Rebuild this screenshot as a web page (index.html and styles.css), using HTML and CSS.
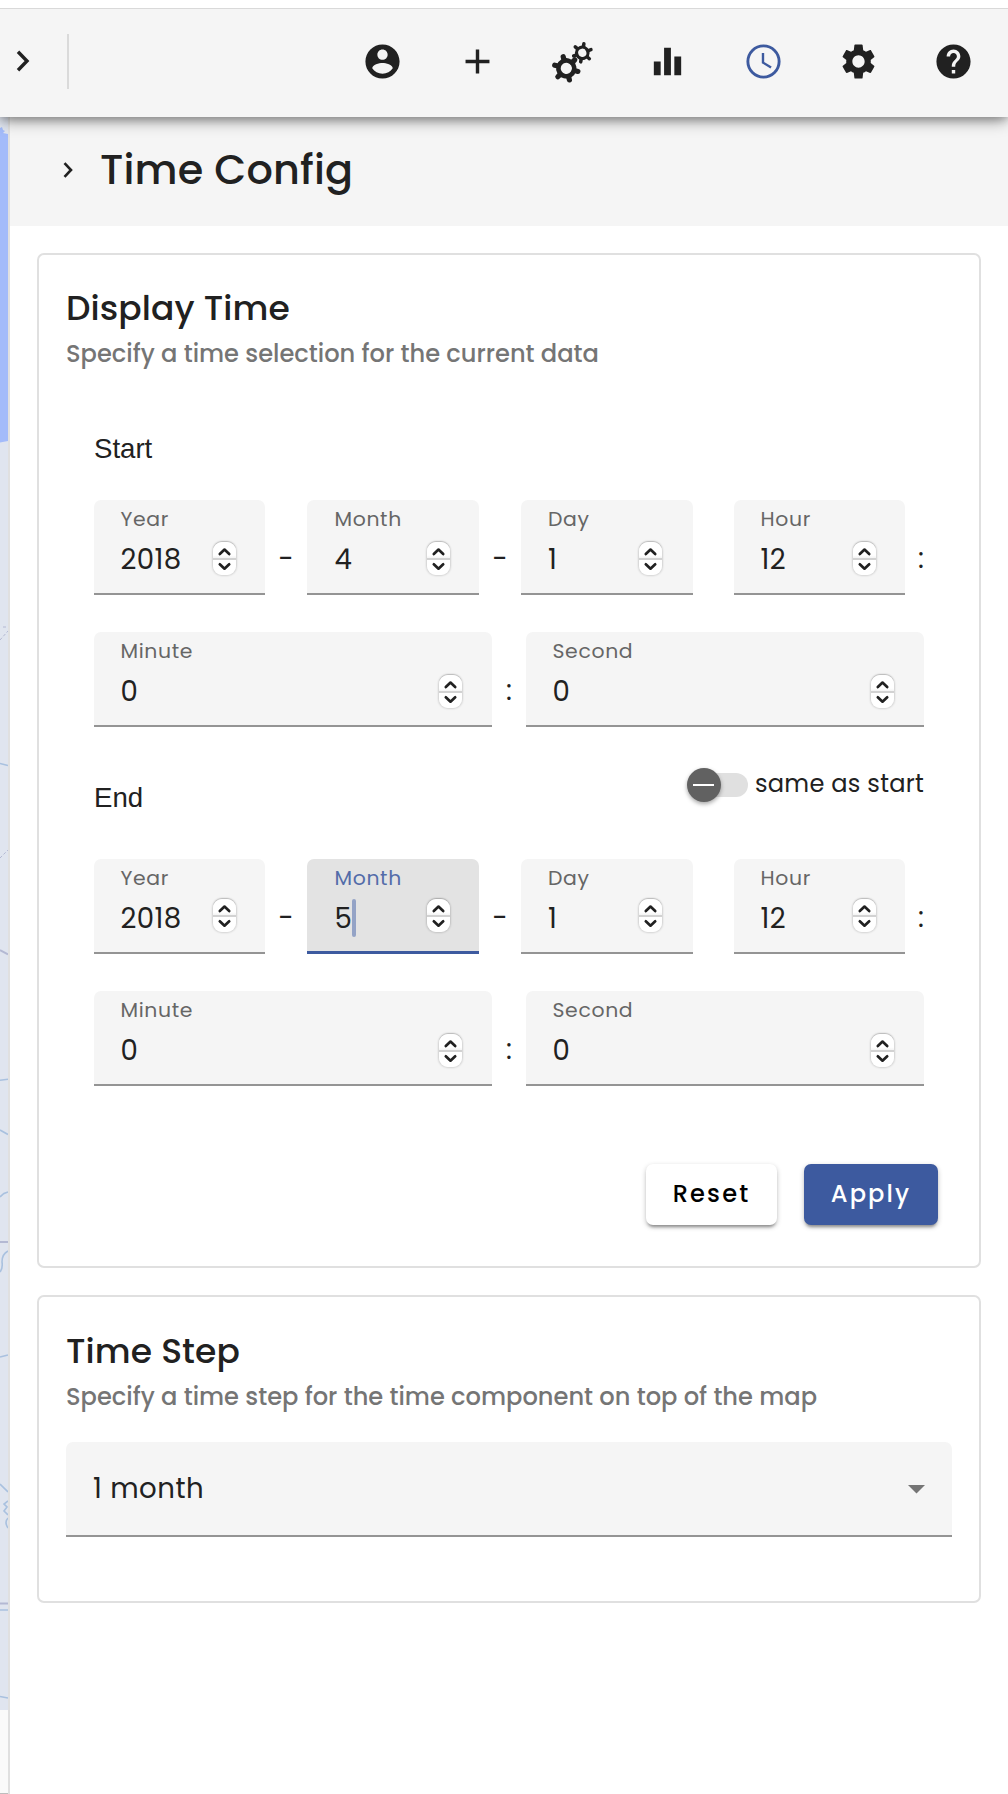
FILE: index.html
```html
<!DOCTYPE html>
<html lang="en">
<head>
<meta charset="utf-8">
<title>Time Config</title>
<link rel="stylesheet" href="styles.css">
</head>
<body>
<svg width="0" height="0" class="defs">
  <symbol id="spin" viewBox="0 0 23 33">
    <path d="M6.800 12 11.500 7.600l4.700 4.400M6.800 22.300 11.500 26.700l4.700-4.400" fill="none" stroke="#212121" stroke-width="2.700" stroke-linecap="round" stroke-linejoin="round"/>
  </symbol>
</svg>
<header class="toolbar">
  <svg class="back" viewBox="0 0 14 22"><path d="M2 1.700 11 11 2 20.300" fill="none" stroke="#212121" stroke-width="3.400"/></svg>
  <span class="divider"></span>
  <nav class="icons">
    <svg class="icon" viewBox="0 0 24 24"><path d="M12 2C6.480 2 2 6.480 2 12s4.480 10 10 10 10-4.480 10-10S17.520 2 12 2zm0 3c1.660 0 3 1.340 3 3s-1.340 3-3 3-3-1.340-3-3 1.340-3 3-3zm0 14.200c-2.500 0-4.710-1.280-6-3.220.03-1.990 4-3.080 6-3.080 1.990 0 5.970 1.090 6 3.080-1.290 1.940-3.500 3.220-6 3.220z"/></svg>
    <svg class="icon" viewBox="0 0 24 24"><path d="M19 13h-6v6h-2v-6H5v-2h6V5h2v6h6v2z"/></svg>
    <svg class="icon" viewBox="0 0 41 41">
      <g transform="translate(14.300 27.300) rotate(15)">
        <circle r="7.900" fill="none" stroke="#212121" stroke-width="4.600"/>
        <path d="M8.500 0H12M4.250 7.360 6 10.390M-4.250 7.360-6 10.390M-8.500 0H-12M-4.250-7.360-6-10.390M4.250-7.360 6-10.390" stroke="#212121" stroke-width="5.200" stroke-linecap="round"/>
      </g>
      <g transform="translate(30.300 11.800) rotate(-20)">
        <circle r="5.700" fill="none" stroke="#212121" stroke-width="3.200"/>
        <path d="M6.500 0H9.200M3.250 5.630 4.600 7.970M-3.250 5.630-4.600 7.970M-6.500 0H-9.200M-3.250-5.630-4.600-7.970M3.250-5.630 4.600-7.970" stroke="#212121" stroke-width="3.500" stroke-linecap="round"/>
      </g>
    </svg>
    <svg class="icon" viewBox="0 0 24 24"><path d="M10 20h4V4h-4v16zm-6 0h4v-8H4v8zM16 9v11h4V9h-4z"/></svg>
    <svg class="icon active" viewBox="0 0 24 24"><path fill-rule="evenodd" d="M12 2a10 10 0 1 0 0 20 10 10 0 0 0 0-20zm0 18.300a8.300 8.300 0 1 1 0-16.600 8.300 8.300 0 0 1 0 16.600z"/><path d="M12.400 7H11v6l5.050 3.100.75-1.200-4.400-2.600z"/></svg>
    <svg class="icon" viewBox="0 0 24 24"><path d="M19.140 12.940c.04-.3.06-.61.06-.94 0-.32-.02-.64-.07-.94l2.030-1.580c.18-.14.23-.41.12-.61l-1.920-3.320c-.12-.22-.37-.29-.59-.22l-2.390.96c-.5-.38-1.030-.7-1.620-.94l-.36-2.940c-.04-.24-.24-.41-.48-.41h-3.840c-.24 0-.43.17-.47.41l-.36 2.940c-.59.24-1.130.57-1.620.94l-2.390-.96c-.22-.08-.47 0-.59.22L2.740 8.870c-.12.21-.08.47.12.61l2.030 1.580c-.05.3-.09.63-.09.94s.02.64.07.94l-2.030 1.580c-.18.14-.23.41-.12.61l1.920 3.320c.12.22.37.29.59.22l2.390-.96c.5.38 1.030.7 1.620.94l.36 2.940c.05.24.24.41.48.41h3.840c.24 0 .44-.17.47-.41l.36-2.940c.59-.24 1.130-.56 1.620-.94l2.390.96c.22.08.47 0 .59-.22l1.920-3.320c.12-.22.07-.47-.12-.61l-2.010-1.580zM12 15.600c-1.980 0-3.600-1.620-3.600-3.600s1.620-3.600 3.600-3.600 3.600 1.620 3.600 3.600-1.620 3.600-3.600 3.600z"/></svg>
    <svg class="icon" viewBox="0 0 24 24"><path d="M12 2C6.480 2 2 6.480 2 12s4.480 10 10 10 10-4.480 10-10S17.520 2 12 2zm1 17h-2v-2h2v2zm2.070-7.750l-.9.920C13.450 12.900 13 13.500 13 15h-2v-.5c0-1.100.45-2.100 1.170-2.830l1.240-1.260c.37-.36.59-.86.59-1.410 0-1.100-.9-2-2-2s-2 .9-2 2H8c0-2.210 1.790-4 4-4s4 1.790 4 4c0 .88-.36 1.680-.93 2.250z"/></svg>
  </nav>
</header>
<div class="shell">
  <svg class="map" viewBox="0 117 8 1677">
    <rect y="117" width="8" height="1593" fill="#e0e5ef"/>
    <path d="M0 128l2-1 1 3 2 1-2 2 5 1V441l-8 1.500z" fill="#a3bbfa"/>
    <g fill="none" stroke="#a9c1df" stroke-width="1.600">
      <path d="M0 763.500l8 2M0 1080.300l8-1M0 1130l8 4.500M0 1197q3-4 8-5M0 1272q3-4 2-10 0-8 6-11M0 1357l8-2M0 1484l8 8M8 1501l-4 3 3 3-3 4 4 4M8 1518q-4 4 0 10M0 1610h8M0 1696.500l8 1.500"/>
    </g>
    <g fill="none" stroke="#b4b9d3" stroke-width="2">
      <path d="M0 950l8 4.500M0 1242h8M0 1603.500h8"/>
      <path d="M0 640l8-9M3 627h4M0 858l8-8" stroke-width="1" stroke-dasharray="3 2"/>
    </g>
    <rect y="1710" width="8" height="84" fill="#fafafa"/>
    <rect y="1793" width="8" height="1" fill="#bdbdbd"/>
  </svg>
  <main class="panel">
    <div class="panel-head">
      <svg class="chev" viewBox="0 0 10 16"><path d="M1.500 1.200 8 8 1.500 14.800" fill="none" stroke="#212121" stroke-width="2.600"/></svg>
      <h1>Time Config</h1>
    </div>
    <section class="card time">
      <h2>Display Time</h2>
      <p class="sub">Specify a time selection for the current data</p>
      <div class="form">
        <div class="group first"><h3>Start</h3></div>
        <div class="row date">
          <div class="field"><div class="txt"><label>Year</label><b>2018</b></div><svg class="spinner"><use href="#spin"/></svg></div>
          <i class="sep">-</i>
          <div class="field month"><div class="txt"><label>Month</label><b>4</b></div><svg class="spinner"><use href="#spin"/></svg></div>
          <i class="sep">-</i>
          <div class="field day"><div class="txt"><label>Day</label><b>1</b></div><svg class="spinner"><use href="#spin"/></svg></div>
          <i></i>
          <div class="field"><div class="txt"><label>Hour</label><b>12</b></div><svg class="spinner"><use href="#spin"/></svg></div>
          <i class="sep end">:</i>
        </div>
        <div class="row clock">
          <div class="field"><div class="txt"><label>Minute</label><b>0</b></div><svg class="spinner"><use href="#spin"/></svg></div>
          <i class="sep">:</i>
          <div class="field"><div class="txt"><label>Second</label><b>0</b></div><svg class="spinner"><use href="#spin"/></svg></div>
        </div>
        <div class="group second">
          <h3>End</h3>
          <div class="toggle"><span class="track"><span class="thumb"></span></span><span class="tlabel">same as start</span></div>
        </div>
        <div class="row date up">
          <div class="field"><div class="txt"><label>Year</label><b>2018</b></div><svg class="spinner"><use href="#spin"/></svg></div>
          <i class="sep">-</i>
          <div class="field month focus"><div class="txt"><label>Month</label><b>5<span class="caret"></span></b></div><svg class="spinner"><use href="#spin"/></svg></div>
          <i class="sep">-</i>
          <div class="field day"><div class="txt"><label>Day</label><b>1</b></div><svg class="spinner"><use href="#spin"/></svg></div>
          <i></i>
          <div class="field"><div class="txt"><label>Hour</label><b>12</b></div><svg class="spinner"><use href="#spin"/></svg></div>
          <i class="sep end">:</i>
        </div>
        <div class="row clock">
          <div class="field"><div class="txt"><label>Minute</label><b>0</b></div><svg class="spinner"><use href="#spin"/></svg></div>
          <i class="sep">:</i>
          <div class="field"><div class="txt"><label>Second</label><b>0</b></div><svg class="spinner"><use href="#spin"/></svg></div>
        </div>
      </div>
      <div class="actions"><button class="btn reset">Reset</button><button class="btn apply">Apply</button></div>
    </section>
    <section class="card step">
      <h2>Time Step</h2>
      <p class="sub">Specify a time step for the time component on top of the map</p>
      <div class="select"><span class="val">1 month</span><svg class="arrow" viewBox="0 0 17 9"><path d="M0 0h17L8.500 8.500z" fill="#757575"/></svg></div>
    </section>
  </main>
</div>
</body>
</html>
```
FILE: styles.css
```css
* { box-sizing: border-box; }
body { margin: 0; background: #fff; color: #212121; font-family: Poppins, Inter, "Liberation Sans", sans-serif; padding-top: 8px; height: 1794px; overflow: hidden; }
h1, h2, h3, p { margin: 0; font-weight: 500; }
i, b { font-style: normal; font-weight: 400; }
.defs { display: none; }
.toolbar { position: relative; z-index: 1; height: 109px; border-top: 1px solid #d9d9d9; background: #f5f5f5; display: flex; align-items: center; padding: 0 34px 4px 16px; box-shadow: 0 6px 14px -2px rgba(0,0,0,.4), 0 2px 8px rgba(0,0,0,.2); clip-path: inset(0 0 -40px 0); }
.back { width: 14px; height: 22px; }
.divider { width: 2px; height: 55px; background: #dadada; margin-left: 37px; }
.icons { display: flex; gap: 54.300px; margin-left: auto; margin-right: -.200px; }
.icon { width: 41px; height: 41px; fill: #212121; overflow: visible; }
.icon:first-child { margin-right: -.400px; }
.icon.active { fill: #3d5a9f; }
.shell { display: flex; height: 1677px; }
.map { width: 8px; height: 1677px; }
.panel { flex: 1; border-left: 2px solid #e0e0e0; }
.panel-head { height: 109px; background: #f5f5f5; display: flex; align-items: center; padding: 0 0 3px 53px; }
.chev { width: 10px; height: 16px; }
h1 { font-size: 41.400px; line-height: 50px; margin-left: 27px; letter-spacing: .15px; }
.card { margin: 27px 27px 0; border: 2px solid #e0e0e0; border-radius: 7px; padding: 33px 27px 0; }
.time { height: 1015px; }
.step { height: 308px; padding-top: 34px; }
h2 { font-size: 34.500px; line-height: 40px; letter-spacing: .1px; }
.sub { margin-top: 11px; font-size: 24.150px; line-height: 30px; color: #757575; }
.form { margin: 0 28px; }
.group { display: flex; justify-content: space-between; }
.first { padding: 60px 0 31px; }
.second { height: 132px; padding-top: 51px; }
h3 { font-family: "Liberation Sans", sans-serif; font-size: 27.600px; line-height: 40px; font-weight: 400; }
.row { display: grid; }
.date { grid-template-columns: 171px 42px 172px 42px 172px 41px 171px 19px; }
.clock { grid-template-columns: 398px 34px 398px; margin-top: 37px; }
.sep { font-size: 27.600px; line-height: 40px; padding-top: 39px; text-align: center; }
.end { text-align: right; }
.field { height: 95px; background: #f5f5f5; border-bottom: 2px solid #949494; border-radius: 7px 7px 0 0; display: flex; justify-content: space-between; padding: 7px 29px 0 26.500px; }
.month { padding-left: 27.500px; }
.day { padding-left: 27px; padding-right: 31px; }
.txt { display: flex; flex-direction: column; }
label { font-size: 20.400px; line-height: 24px; letter-spacing: .65px; color: #666; }
b { display: flex; font-size: 27.600px; line-height: 40px; margin-top: 9px; letter-spacing: .4px; }
.spinner { width: 23px; height: 33px; margin-top: 35px; background: linear-gradient(#fff 40%, #f4f4f4 48%, #d2d2d2 48%, #d2d2d2 54%, #fff 54%); border-radius: 9px; box-shadow: 0 0 2px 1px rgba(0,0,0,.14), 0 -1px 1px rgba(0,0,0,.14); }
.up .spinner { margin-top: 33px; }
.clock .spinner { margin-top: 36px; }
.clock .field { padding-right: 30px; }
.clock .field:last-child { padding-right: 30.500px; }
.focus { background: #e3e3e3; border-bottom: 3px solid #3d5a9f; }
.focus label { color: #536ca9; }
.caret { width: 4px; height: 38px; border-radius: 2px; background: #94a3c6; }
.toggle { display: flex; height: 24px; margin-top: -5px; }
.track { position: relative; width: 58px; height: 24px; border-radius: 12px; background: #e0e0e0; }
.thumb { position: absolute; left: -3px; top: -5px; width: 34px; height: 34px; border-radius: 50%; background: #616161; box-shadow: 0 2px 4px rgba(0,0,0,.35); display: flex; align-items: center; justify-content: center; }
.thumb::after { content: ""; width: 21px; height: 2.500px; background: #fff; }
.tlabel { font-size: 24.100px; line-height: 22px; margin-left: 7.500px; letter-spacing: .25px; }
.actions { display: flex; justify-content: flex-end; gap: 27px; margin: 78px 14px 0 0; }
.btn { height: 61px; border: 0; border-radius: 7px; font: 500 24.100px/59px Poppins, Inter, sans-serif; letter-spacing: 2.150px; padding: 0 0 2px; width: 131px; background: #fff; color: #000; box-shadow: 0 4px 3px -2px rgba(0,0,0,.3), 0 2px 5px rgba(0,0,0,.25); }
.apply { width: 134px; background: #3d5a9f; color: #fff; }
.select { margin-top: 30px; height: 95px; background: #f5f5f5; border-bottom: 2px solid #949494; border-radius: 7px 7px 0 0; display: flex; align-items: center; justify-content: space-between; padding: 0 27.500px 0 27px; }
.val { font-size: 27.600px; line-height: 40px; letter-spacing: .5px; }
.arrow { width: 17px; height: 9px; margin-top: 2px; }
```
